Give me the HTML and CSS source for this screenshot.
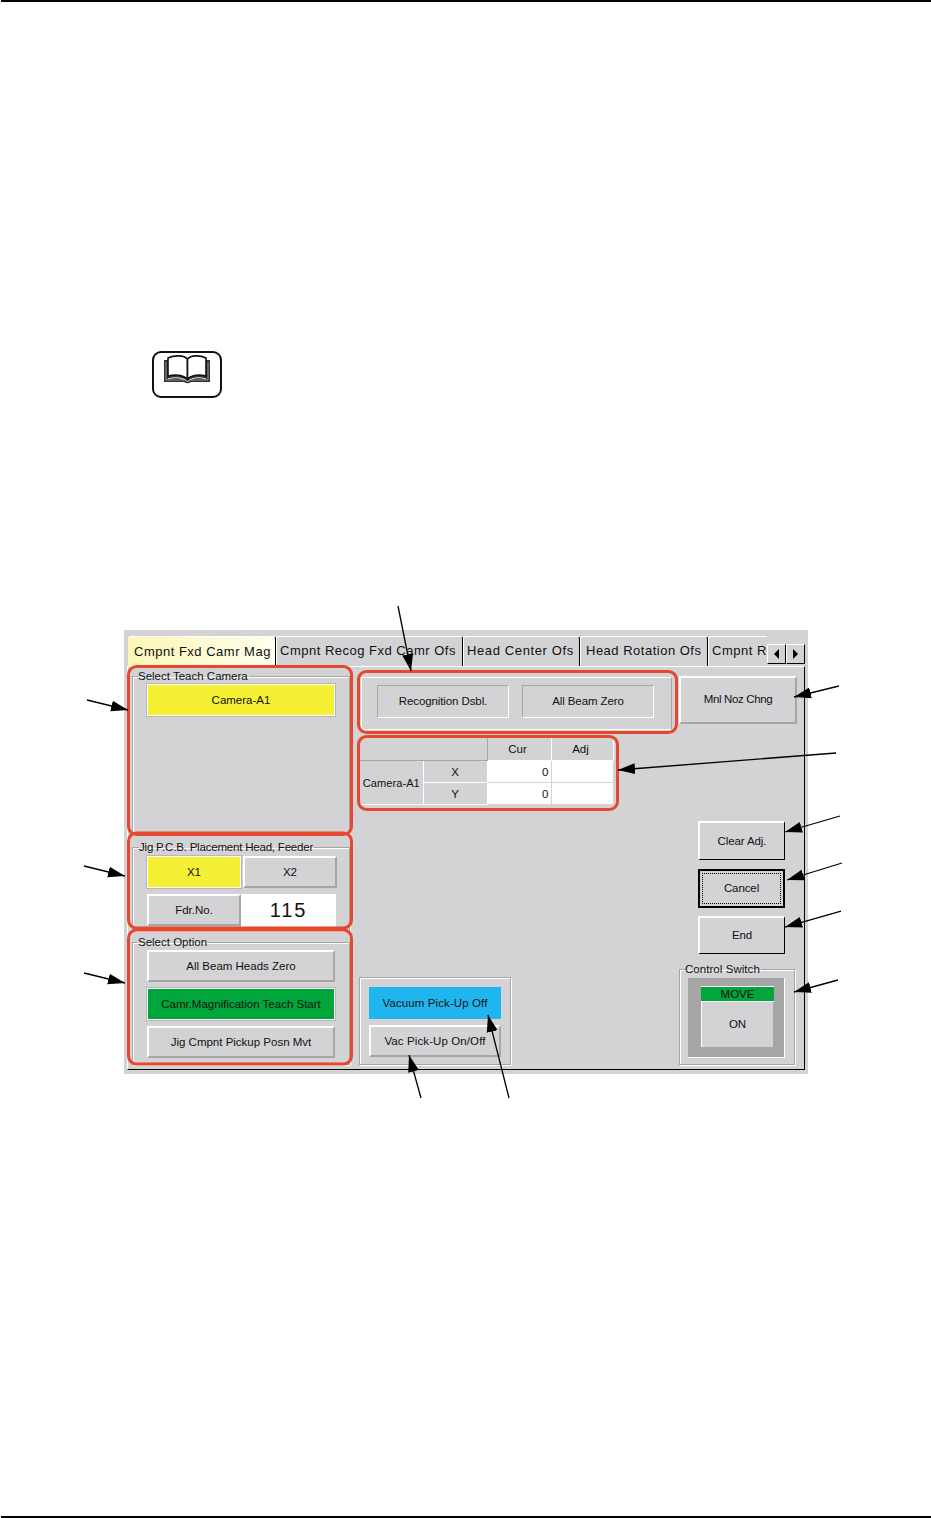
FILE: index.html
```html
<!DOCTYPE html>
<html lang="en">
<head>
    <meta charset="UTF-8">
    <meta name="viewport" content="width=device-width, initial-scale=1.0">
    <title>Cmpnt Fxd Camr Mag</title>
    <link rel="stylesheet" href="styles.css">
</head>
<body>
    <div class="rule"></div>

    <!-- reference mark -->
    <div class="book-mark">
        <svg width="48" height="30" viewBox="0 0 48 30">
            <path d="M0 5 H46 V27 H27 Q23.500 29.500 20 27 H0 Z" fill="#333"/>
            <path d="M2 7 V25 H20 M44 7 V25 H27" fill="none" stroke="#aaa" stroke-width="0.8"/>
            <path d="M4 24 C10 22 18 22 23.500 26.500 C29 22 36 22 42 24" fill="none" stroke="#fff" stroke-width="0.9"/>
            <path d="M23.500 24 C18 19.500 10 19.500 4 21 V3 C10 0 20 0 23.500 4 Z" fill="#fff" stroke="#111" stroke-width="1.6"/>
            <path d="M23.500 24 C29 19.500 36 19.500 42 21 V3 C36 0 27 0 23.500 4 Z" fill="#fff" stroke="#111" stroke-width="1.6"/>
        </svg>
    </div>

    <div class="panel">
        <div class="tab-row">
            <div class="tabs">
                <div class="tab tab-active">Cmpnt Fxd Camr Mag</div>
                <div class="tab tab-2">Cmpnt Recog Fxd Camr Ofs</div>
                <div class="tab tab-3">Head Center Ofs</div>
                <div class="tab tab-4">Head Rotation Ofs</div>
                <div class="tab tab-5">Cmpnt Recog</div>
            </div>
            <div class="scroll-btn"><span class="tri-left"></span></div>
            <div class="scroll-btn"><span class="tri-right"></span></div>
        </div>

        <div class="page">
            <div class="col-left">
                <fieldset class="group group-camera">
                    <legend>Select Teach Camera</legend>
                    <div class="btn btn-flat yellow wide">Camera-A1</div>
                </fieldset>
                <fieldset class="group group-jig">
                    <legend>Jig P.C.B. Placement Head, Feeder</legend>
                    <div class="jig-row">
                        <div class="btn btn-flat yellow half">X1</div>
                        <div class="btn half">X2</div>
                    </div>
                    <div class="jig-row feeder-row">
                        <div class="btn half fdr">Fdr.No.</div>
                        <div class="fdr-value">115</div>
                    </div>
                </fieldset>
                <fieldset class="group group-option">
                    <legend>Select Option</legend>
                    <div class="btn wide">All Beam Heads Zero</div>
                    <div class="btn btn-flat green wide">Camr.Magnification Teach Start</div>
                    <div class="btn wide">Jig Cmpnt Pickup Posn Mvt</div>
                </fieldset>
            </div>

            <div class="col-mid">
                <div class="box-recog">
                    <div class="btn-line">Recognition Dsbl.</div>
                    <div class="btn-line">All Beam Zero</div>
                </div>
                <table class="ofs-table">
                    <colgroup>
                        <col class="col-name">
                        <col class="col-axis">
                        <col class="col-cur">
                        <col class="col-adj">
                    </colgroup>
                    <tr>
                        <td class="blank" colspan="2"></td>
                        <td class="head">Cur</td>
                        <td class="head">Adj</td>
                    </tr>
                    <tr>
                        <td class="label name" rowspan="2">Camera-A1</td>
                        <td class="label">X</td>
                        <td class="value">0</td>
                        <td class="value"></td>
                    </tr>
                    <tr>
                        <td class="label">Y</td>
                        <td class="value">0</td>
                        <td class="value"></td>
                    </tr>
                </table>
                <div class="box-vac">
                    <div class="btn btn-flat blue vac">Vacuum Pick-Up Off</div>
                    <div class="btn vac">Vac Pick-Up On/Off</div>
                </div>
            </div>

            <div class="col-right">
                <div class="btn noz">Mnl Noz Chng</div>
                <div class="btn-black first">Clear Adj.</div>
                <div class="btn-black cancel"><span>Cancel</span></div>
                <div class="btn-black end">End</div>
                <fieldset class="group group-switch">
                    <legend>Control Switch</legend>
                    <div class="switch">
                        <div class="switch-move">MOVE</div>
                        <div class="switch-on">ON</div>
                    </div>
                </fieldset>
            </div>
        </div>
    </div>

    <div class="rule rule-bottom"></div>

    <!-- callouts on top of the screen shot -->
    <svg class="callouts" width="931" height="1518" viewBox="0 0 931 1518">
        <defs>
            <marker id="head" markerUnits="userSpaceOnUse" markerWidth="18" markerHeight="12" refX="17" refY="6" orient="auto">
                <path d="M0 0.500 L17 6 L0 11.500 Z" fill="#000"/>
            </marker>
        </defs>
        <g class="frames">
            <rect x="128.500" y="666.500" width="223" height="168" rx="8"/>
            <rect x="128.500" y="833" width="223" height="95" rx="8"/>
            <rect x="128.500" y="930" width="223" height="134" rx="8"/>
            <rect x="358.500" y="671.500" width="318" height="61" rx="8"/>
            <rect x="358.500" y="736.500" width="259" height="73" rx="8"/>
        </g>
        <g class="arrows">
            <line x1="398" y1="606" x2="411" y2="671"/>
            <line x1="87" y1="700" x2="128" y2="710"/>
            <line x1="84" y1="866" x2="125" y2="876"/>
            <line x1="84" y1="973" x2="125" y2="983"/>
            <line x1="839" y1="686" x2="794" y2="697"/>
            <line x1="836" y1="753" x2="618" y2="770"/>
            <line x1="840" y1="816" x2="785" y2="832"/>
            <line x1="842" y1="863" x2="787" y2="880"/>
            <line x1="841" y1="911" x2="785" y2="927"/>
            <line x1="838" y1="980" x2="794" y2="992"/>
            <line x1="421" y1="1098" x2="409" y2="1055"/>
            <line x1="509" y1="1098" x2="488" y2="1015"/>
        </g>
    </svg>
</body>
</html>
```
FILE: styles.css
```css
/* page */
body {
    margin: 0;
    height: 1518px;
    position: relative;
    display: flex;
    flex-direction: column;
    background-color: #fff;
    color: #111;
    font-family: "Liberation Sans", Arial, sans-serif;
    font-size: 11.5px;
    overflow: hidden;
}
.rule {
    height: 2px;
    margin-left: 1px;
    background-color: #000;
}
.rule-bottom {
    margin-top: auto;
}
.book-mark {
    box-sizing: border-box;
    width: 70px;
    height: 47px;
    margin: 349px 0 0 152px;
    padding: 2px 0 0 10px;
    border: 2px solid #111;
    border-radius: 9px;
}

/* panel */
.panel {
    box-sizing: border-box;
    width: 684px;
    height: 444px;
    margin: 232px 0 0 124px;
    padding: 6px 3px 4px 3px;
    background-color: #d3d3d5;
}
.tab-row {
    display: flex;
    height: 30px;
    padding-left: 1px;
}
.tabs {
    display: flex;
    width: 640px;
    overflow: hidden;
}
.tab {
    box-sizing: border-box;
    flex: none;
    height: 30px;
    padding: 6px 0 0 3px;
    border-top: 1px solid #fff;
    border-left: 1px solid #fff;
    border-right: 1px solid #000;
    border-radius: 3px 3px 0 0;
    font-size: 13px;
    letter-spacing: 0.5px;
    white-space: nowrap;
}
.tab-active {
    width: 148px;
    padding-top: 7px;
    padding-left: 6px;
    border-left: none;
    background: linear-gradient(100deg, #fdf6b4, #fffff0);
}
.tab-2 { width: 187px; }
.tab-3 { width: 117px; letter-spacing: 0.62px; }
.tab-4 { width: 128px; padding-left: 5px; }
.tab-5 { width: 70px; border-right: none; }
.scroll-btn {
    box-sizing: border-box;
    display: flex;
    align-items: center;
    justify-content: center;
    width: 19px;
    height: 20px;
    margin-top: 8px;
    border-top: 1px solid #fff;
    border-left: 1px solid #fff;
    border-right: 1px solid #000;
    border-bottom: 1px solid #000;
}
.tri-left {
    border: 5px solid transparent;
    border-left: none;
    border-right: 5px solid #000;
}
.tri-right {
    border: 5px solid transparent;
    border-right: none;
    border-left: 5px solid #000;
}
.page {
    box-sizing: border-box;
    display: flex;
    gap: 9px;
    height: 404px;
    padding: 3px 0 4px 4px;
    border-top: 1px solid #fff;
    border-left: 1px solid #fff;
    border-right: 1px solid #000;
    border-bottom: 1px solid #000;
}
.col-left {
    display: flex;
    flex-direction: column;
    width: 218px;
}
.col-mid {
    display: flex;
    flex-direction: column;
    width: 311px;
}
.col-right {
    display: flex;
    flex-direction: column;
    width: 118px;
}

/* group frames */
.group {
    box-sizing: border-box;
    min-width: 0;
    margin: 0;
    padding: 1px 0 0 14px;
    border: 1px solid #a6a6a6;
    box-shadow: 1px 1px 0 #fff, inset 1px 1px 0 #fff;
}
.group legend {
    margin-left: -9px;
    padding: 0 1px 0 0;
    font-size: 11.5px;
    line-height: 13px;
    white-space: nowrap;
}
.group-camera { height: 164px; }
.group-jig { height: 90px; margin-top: 7px; padding-top: 2px; }
.group-jig legend { margin-left: -8px; letter-spacing: -0.2px; }
.group-option { height: 129px; margin-top: 5px; padding-top: 1px; }
.group-option .btn { margin-bottom: 6px; }

/* buttons */
.btn {
    box-sizing: border-box;
    display: flex;
    align-items: center;
    justify-content: center;
    height: 32px;
    border-top: 2px solid #fff;
    border-left: 2px solid #fff;
    border-right: 2px solid #a6a6a6;
    border-bottom: 2px solid #a6a6a6;
    white-space: nowrap;
}
.btn-flat {
    border: 1px solid #fff;
}
.wide { width: 188px; }
.half { width: 94px; }
.yellow { background-color: #f5f033; box-shadow: 0 0 0 1px #b8b8b8; }
.green { background-color: #00a63c; box-shadow: 0 0 0 1px #b8b8b8; }
.blue { background-color: #1fb6ef; border: none; }
.jig-row {
    display: flex;
    gap: 2px;
}
.feeder-row {
    gap: 0;
    margin-top: 6px;
}
.fdr-value {
    display: flex;
    align-items: center;
    justify-content: center;
    width: 95px;
    height: 33px;
    background-color: #fff;
    font-size: 20px;
    letter-spacing: 1.8px;
}
.box-recog {
    box-sizing: border-box;
    display: flex;
    gap: 13px;
    width: 311px;
    height: 53px;
    margin: 7px 0 0 2px;
    padding: 7px 0 0 15px;
    border: 1px solid #fff;
    border-right-color: #a6a6a6;
}
.btn-line {
    box-sizing: border-box;
    display: flex;
    align-items: center;
    justify-content: center;
    width: 132px;
    height: 33px;
    padding-bottom: 2px;
    border-top: 1px solid #a6a6a6;
    border-left: 1px solid #a6a6a6;
    border-right: 1px solid #fff;
    border-bottom: 1px solid #fff;
    letter-spacing: -0.1px;
}

/* offset table */
.ofs-table {
    width: 253px;
    margin: 8px 0 0 1px;
    table-layout: fixed;
    border-collapse: collapse;
    font-size: 11.5px;
}
.col-name { width: 63px; }
.col-axis { width: 64px; }
.col-cur { width: 64px; }
.col-adj { width: 62px; }
.ofs-table td {
    height: 21px;
    padding: 0;
    text-align: center;
    border-right: 1px solid #fff;
    border-bottom: 1px solid #fff;
}
.ofs-table .blank { border-bottom: 1px solid #a6a6a6; border-right: 1px solid #a6a6a6; }
.ofs-table .head { padding: 0 3px 1px 0; }
.ofs-table .label { border-left: 1px solid #fff; }
.ofs-table .name { border-left: none; font-size: 11px; letter-spacing: 0.1px; white-space: nowrap; }
.ofs-table .value {
    padding-right: 2px;
    background-color: #fff;
    text-align: right;
    border-color: #d3d3d5;
}
.box-vac {
    box-sizing: border-box;
    width: 152px;
    height: 88px;
    margin-top: auto;
    padding: 9px 0 0 9px;
    border: 1px solid #a6a6a6;
    box-shadow: 1px 1px 0 #fff, inset 1px 1px 0 #fff;
}
.vac { width: 132px; letter-spacing: 0.1px; }
.box-vac .btn + .btn { margin-top: 6px; }

/* right column */
.noz {
    height: 48px;
    margin-top: 6px;
    padding-bottom: 2px;
    letter-spacing: -0.35px;
}
.btn-black {
    box-sizing: border-box;
    display: flex;
    align-items: center;
    justify-content: center;
    width: 87px;
    height: 39px;
    margin: 9px 0 0 19px;
    border-top: 2px solid #fff;
    border-left: 2px solid #fff;
    border-right: 1px solid #000;
    border-bottom: 1px solid #000;
    letter-spacing: -0.1px;
}
.first { margin-top: 97px; }
.end { margin-top: 8px; }
.cancel {
    padding: 2px;
    border: 2px solid #000;
}
.cancel span {
    box-sizing: border-box;
    display: flex;
    align-items: center;
    justify-content: center;
    width: 100%;
    height: 100%;
    border: 1px dotted #000;
}
.group-switch {
    width: 116px;
    height: 102px;
    margin: 9px 0 0 0;
    padding: 2px 0 0 8px;
}
.group-switch legend { margin-left: -3px; letter-spacing: 0.05px; }
.switch {
    box-sizing: border-box;
    width: 97px;
    height: 80px;
    padding: 8px 0 0 13px;
    background-color: #a6a6a6;
    border-right: 1px solid #fff;
    border-bottom: 1px solid #fff;
}
.switch-move {
    box-sizing: border-box;
    width: 73px;
    height: 16px;
    line-height: 14px;
    background-color: #00a63c;
    border-top: 1px solid #fff;
    border-bottom: 1px solid #fff;
    text-align: center;
}
.switch-on {
    box-sizing: border-box;
    display: flex;
    align-items: center;
    justify-content: center;
    width: 72px;
    height: 45px;
    padding-bottom: 2px;
    background-color: #d3d3d5;
    border-left: 1px solid #fff;
}

/* callouts */
.callouts {
    position: absolute;
    top: 0;
    left: 0;
    pointer-events: none;
}
.frames rect {
    fill: none;
    stroke: #e4492f;
    stroke-width: 3;
}
.arrows line {
    stroke: #000;
    stroke-width: 1.3;
    marker-end: url(#head);
}
```
